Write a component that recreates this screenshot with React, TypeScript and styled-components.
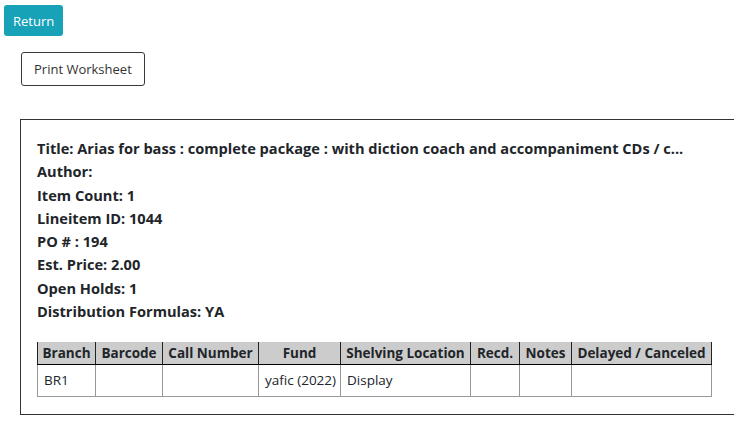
import React from "react";
import styled, { createGlobalStyle } from "styled-components";

const Global = createGlobalStyle`
  html, body { margin: 0; padding: 0; background: #fff; }
  body { font-family: "Open Sans", "Noto Sans", sans-serif; color: #212529; overflow: hidden; }
  * { box-sizing: border-box; }
`;

const Page = styled.div`
  padding: 5px 0 0 4px;
  width: 760px;
`;

const ReturnButton = styled.button`
  display: block;
  height: 31px;
  padding: 0 9px;
  background: #17a2b8;
  color: #fff;
  border: none;
  border-radius: 3px;
  font-family: inherit;
  font-size: 13px;
`;

const PrintButton = styled.button`
  display: block;
  margin: 16px 0 0 17px;
  height: 34px;
  padding: 0 12px;
  background: #fff;
  color: #333;
  border: 1px solid #343a40;
  border-radius: 3px;
  font-family: inherit;
  font-size: 13px;
`;

const Sheet = styled.div`
  margin: 33px 0 0 16px;
  width: 760px;
  border: 1px solid #333;
  padding: 17px 16px 17px 16px;
`;

const Line = styled.div`
  font-weight: 700;
  font-size: 14.6px;
  line-height: 23.3px;
  color: #212529;
  white-space: nowrap;
`;

const Lines = styled.div`
  margin-bottom: 19px;
`;

const Table = styled.table`
  border-collapse: collapse;
  table-layout: fixed;
  font-size: 13.5px;
  width: 675px;
`;

const Th = styled.th<{ $w: number }>`
  width: ${(p) => p.$w}px;
  background: #ccc;
  border-left: 1px solid #222;
  border-right: 1px solid #222;
  border-bottom: 1px solid #000;
  padding: 0;
  height: 22px;
  font-weight: 700;
  text-align: center;
  white-space: nowrap;
  color: #212529;
`;

const Td = styled.td`
  border: 1px solid #999;
  padding: 0 6px;
  height: 32px;
  font-weight: 400;
  color: #212529;
  white-space: nowrap;
`;

const fields = [
  "Title: Arias for bass : complete package : with diction coach and accompaniment CDs / c...",
  "Author:",
  "Item Count: 1",
  "Lineitem ID: 1044",
  "PO # : 194",
  "Est. Price: 2.00",
  "Open Holds: 1",
  "Distribution Formulas: YA",
];

const headers: [string, number][] = [
  ["Branch", 58],
  ["Barcode", 67],
  ["Call Number", 96],
  ["Fund", 82],
  ["Shelving Location", 130],
  ["Recd.", 49],
  ["Notes", 52],
  ["Delayed / Canceled", 140],
];
const row = ["BR1", "", "", "yafic (2022)", "Display", "", "", ""];

export default function App() {
  return (
    <>
      <Global />
      <Page>
        <ReturnButton>Return</ReturnButton>
        <PrintButton>Print Worksheet</PrintButton>
        <Sheet>
          <Lines>
            {fields.map((f) => (
              <Line key={f}>{f}</Line>
            ))}
          </Lines>
          <Table>
            <thead>
              <tr>
                {headers.map(([h, w]) => (
                  <Th key={h} $w={w}>
                    {h}
                  </Th>
                ))}
              </tr>
            </thead>
            <tbody>
              <tr>
                {row.map((c, i) => (
                  <Td key={i}>{c}</Td>
                ))}
              </tr>
            </tbody>
          </Table>
        </Sheet>
      </Page>
    </>
  );
}
